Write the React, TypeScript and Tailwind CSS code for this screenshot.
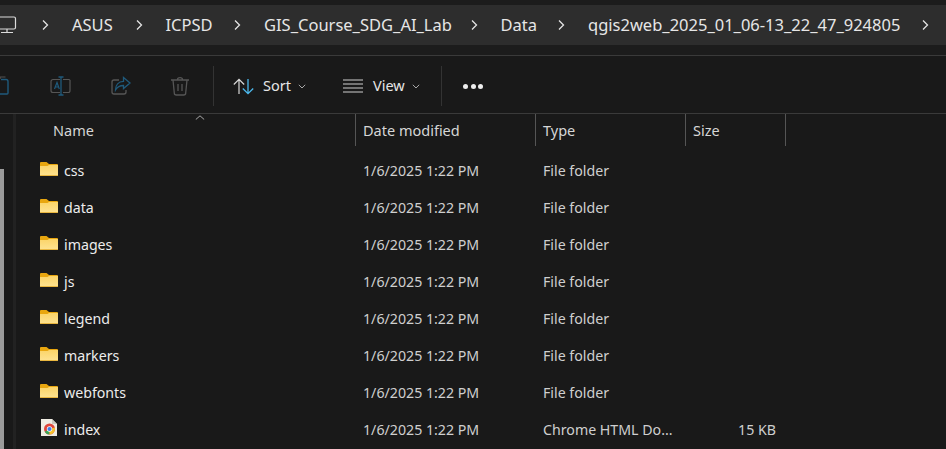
import React from 'react';

const crumbs = [
  { label: 'ASUS', w: 'w-[42px]' },
  { label: 'ICPSD', w: 'w-[47px]' },
  { label: 'GIS_Course_SDG_AI_Lab', w: 'w-[185px]' },
  { label: 'Data', w: 'w-[36px]' },
  { label: 'qgis2web_2025_01_06-13_22_47_924805', w: 'w-[312px]' },
];

const rows = [
  { name: 'css', type: 'File folder' },
  { name: 'data', type: 'File folder' },
  { name: 'images', type: 'File folder' },
  { name: 'js', type: 'File folder' },
  { name: 'legend', type: 'File folder' },
  { name: 'markers', type: 'File folder' },
  { name: 'webfonts', type: 'File folder' },
  { name: 'index', type: 'Chrome HTML Do...', size: '15 KB', chrome: true },
];

function Chevron() {
  return (
    <svg width="7" height="12" viewBox="0 0 7 12" fill="none" className="shrink-0">
      <path d="M1 1.5 5.5 6 1 10.5" stroke="#e4e4e4" strokeWidth="1.3" />
    </svg>
  );
}

function SmallChevron() {
  return (
    <svg width="8" height="5" viewBox="0 0 8 5" fill="none" className="shrink-0">
      <path d="M.8.8 4 4 7.2.8" stroke="#a8a8a8" strokeWidth="1" />
    </svg>
  );
}

function Folder() {
  return (
    <svg width="18" height="14" viewBox="0 0 18 14" className="shrink-0 mt-[-3px]">
      <defs>
        <linearGradient id="folderBody" x1="0" y1="0" x2="0" y2="1">
          <stop offset="0" stopColor="#fbd468" />
          <stop offset="1" stopColor="#fee392" />
        </linearGradient>
      </defs>
      <path d="M0 1a1 1 0 0 1 1-1h5.500L9 2h8a1 1 0 0 1 1 1v2H0z" fill="#e8a60f" />
      <path d="M0 4h7.500L9 3h9v10a1 1 0 0 1-1 1H1a1 1 0 0 1-1-1z" fill="url(#folderBody)" />
      <path d="M0 13h18a1 1 0 0 1-1 1H1a1 1 0 0 1-1-1z" fill="#e9b63f" />
    </svg>
  );
}

function ChromeDoc() {
  return (
    <svg width="16" height="17" viewBox="0 0 16 17" className="shrink-0 mt-[-3px]">
      <path d="M0 0h11l5 5v12H0z" fill="#efece3" />
      <path d="M11 0l5 5h-5z" fill="#c9c6bd" />
      <circle cx="8.500" cy="10" r="5.500" fill="#e0463a" />
      <path d="M8.500 10 3.700 12.700A5.500 5.500 0 0 0 8.600 15.500z" fill="#3aa757" />
      <path d="M8.500 10v5.500A5.500 5.500 0 0 0 13.800 8.500z" fill="#f6c02d" />
      <circle cx="8.500" cy="10" r="2.700" fill="#fff" />
      <circle cx="8.500" cy="10" r="2.100" fill="#3f7de8" />
    </svg>
  );
}

export default function App() {
  return (
    <div className="w-[946px] h-[449px] overflow-hidden bg-[#191919] text-[#e6e6e6] font-['Noto_Sans',sans-serif]">
      {/* address bar */}
      <div className="h-[50px] bg-[#1c1c1c] border-b border-[#3a3a3a] pt-[5px] box-content">
        <div className="h-[40px] bg-[#2d2d2d] flex items-center text-[16.5px] overflow-hidden">
          <svg width="20" height="18" viewBox="0 0 20 18" fill="none" className="shrink-0 ml-[-3px] mr-[25px]">
            <rect x="1" y="1" width="17.500" height="12" rx="1.500" stroke="#dcdcdc" strokeWidth="1.200" />
            <path d="M10 13v3M4 16.500h12" stroke="#dcdcdc" strokeWidth="1.200" />
          </svg>
          <Chevron />
          {crumbs.map((c, i) => (
            <React.Fragment key={c.label}>
              <span className={`${c.w} ml-[23px] mr-[21.5px] whitespace-nowrap shrink-0`}>{c.label}</span>
              {i < crumbs.length - 1 && <Chevron />}
            </React.Fragment>
          ))}
          <Chevron />
        </div>
      </div>

      {/* command bar */}
      <div className="h-[54px] pt-[3px] flex items-center border-b border-[#3a3a3a] box-content">
        <svg width="20" height="20" viewBox="0 0 20 20" fill="none" className="shrink-0 ml-[-11px] mr-[41px]">
          <path d="M11 3V1h5.500" stroke="#555" strokeWidth="1.200" />
          <path d="M12 3.500h5a2 2 0 0 1 2 2V17a1 1 0 0 1-1 1H11" stroke="#1f5a7c" strokeWidth="1.400" />
        </svg>
        <svg width="21" height="20" viewBox="0 0 21 20" fill="none" className="shrink-0 mr-[40px]">
          <path d="M10 3.500H3a2 2 0 0 0-2 2v9a2 2 0 0 0 2 2h7M13 3.500h6a1.500 1.500 0 0 1 1 2v9a2 2 0 0 1-1 2h-6" stroke="#565656" strokeWidth="1.200" />
          <path d="M8.500 1h5M8.500 19h5M11 1v18" stroke="#1f5a7c" strokeWidth="1.300" />
          <path d="M4.500 13 7 6.500 9.300 13M5.300 11h3.300" stroke="#1f5a7c" strokeWidth="1.200" />
        </svg>
        <svg width="20" height="20" viewBox="0 0 20 20" fill="none" className="shrink-0 mr-[40px]">
          <path d="M8 4H3a2 2 0 0 0-2 2v10a2 2 0 0 0 2 2h10a2 2 0 0 0 2-2v-2" stroke="#565656" strokeWidth="1.300" />
          <path d="M12.500 1.500 19 7l-6.500 5.500V9.500C9 9.500 6.500 10.500 4.500 14c0-5 3-8.500 8-8.700z" stroke="#1f5a7c" strokeWidth="1.300" />
        </svg>
        <svg width="18" height="20" viewBox="0 0 18 20" fill="none" className="shrink-0 mr-[24px]">
          <path d="M0 4h18M6.500 3.500C6.500 1 11.500 1 11.500 3.500M2 4l1.300 13a2 2 0 0 0 2 2h7.400a2 2 0 0 0 2-2L16 4M7 8v7M11 8v7" stroke="#565656" strokeWidth="1.300" />
        </svg>
        <div className="w-px h-[40px] bg-[#333] shrink-0" />
        <svg width="21" height="17" viewBox="0 0 21 17" fill="none" className="shrink-0 ml-[19px] mr-[9px]">
          <path d="M6 16V1.500M.8 6.500 6 1.300l5.200 5.200" stroke="#d8d8d8" strokeWidth="1.200" />
          <path d="M15 1v14.500M9.800 10.500 15 15.700l5.200-5.200" stroke="#4cb8ec" strokeWidth="1.300" />
        </svg>
        <span className="text-[14.5px] w-[28px] shrink-0">Sort</span>
        <span className="ml-[7px] mr-[37px] flex"><SmallChevron /></span>
        <svg width="20" height="14" viewBox="0 0 20 14" fill="none" className="shrink-0 mr-[10px]">
          <path d="M0 1h20M0 5h20M0 9h20M0 13h20" stroke="#cfcfcf" strokeWidth="1.200" />
        </svg>
        <span className="text-[14.5px] w-[32px] shrink-0">View</span>
        <span className="ml-[7px] mr-[21px] flex"><SmallChevron /></span>
        <div className="w-px h-[40px] bg-[#333] shrink-0" />
        <div className="flex gap-[2.5px] ml-[21px]">
          <span className="w-[5px] h-[5px] rounded-full bg-[#eee]" />
          <span className="w-[5px] h-[5px] rounded-full bg-[#eee]" />
          <span className="w-[5px] h-[5px] rounded-full bg-[#eee]" />
        </div>
      </div>

      {/* file list */}
      <div className="flex h-[335px]">
        <div className="w-[13px] shrink-0 flex flex-col">
          <div className="h-[55px]" />
          <div className="w-[4px] flex-1 bg-[#9b9b9b]" />
        </div>
        <div className="w-[3px] shrink-0 bg-[#222]" />
        <div className="flex-1 min-w-0">
          <div className="relative h-[32px] grid grid-cols-[340px_180px_150px_100px] text-[14.5px] text-[#d6d6d6]">
            <svg width="10" height="5" viewBox="0 0 10 5" fill="none" className="absolute left-[179px] top-[1px]">
              <path d="M.8 4.500 5 .8l4.200 3.700" stroke="#a8a8a8" strokeWidth="1" />
            </svg>
            <div className="border-r border-[#555] pl-[37px] pt-[2px] flex items-center">Name</div>
            <div className="border-r border-[#555] pl-[7px] pt-[2px] flex items-center">Date modified</div>
            <div className="border-r border-[#555] pl-[7px] pt-[2px] flex items-center">Type</div>
            <div className="border-r border-[#555] pl-[7px] pt-[2px] flex items-center">Size</div>
          </div>
          <div className="pt-[6px]">
            {rows.map((r) => (
              <div key={r.name} className="h-[37px] grid grid-cols-[340px_180px_150px_90px] items-center text-[14.2px]">
                <div className="flex items-center pl-[24px]">
                  <span className="w-[24px] flex">{r.chrome ? <span className="ml-[1px] flex"><ChromeDoc /></span> : <Folder />}</span>
                  <span className="text-[#ececec]">{r.name}</span>
                </div>
                <div className="pl-[7px] text-[#cfcfcf]">1/6/2025 1:22 PM</div>
                <div className="pl-[7px] text-[#cfcfcf] whitespace-nowrap">{r.type}</div>
                <div className="text-right text-[#cfcfcf]">{r.size}</div>
              </div>
            ))}
          </div>
        </div>
      </div>
    </div>
  );
}
